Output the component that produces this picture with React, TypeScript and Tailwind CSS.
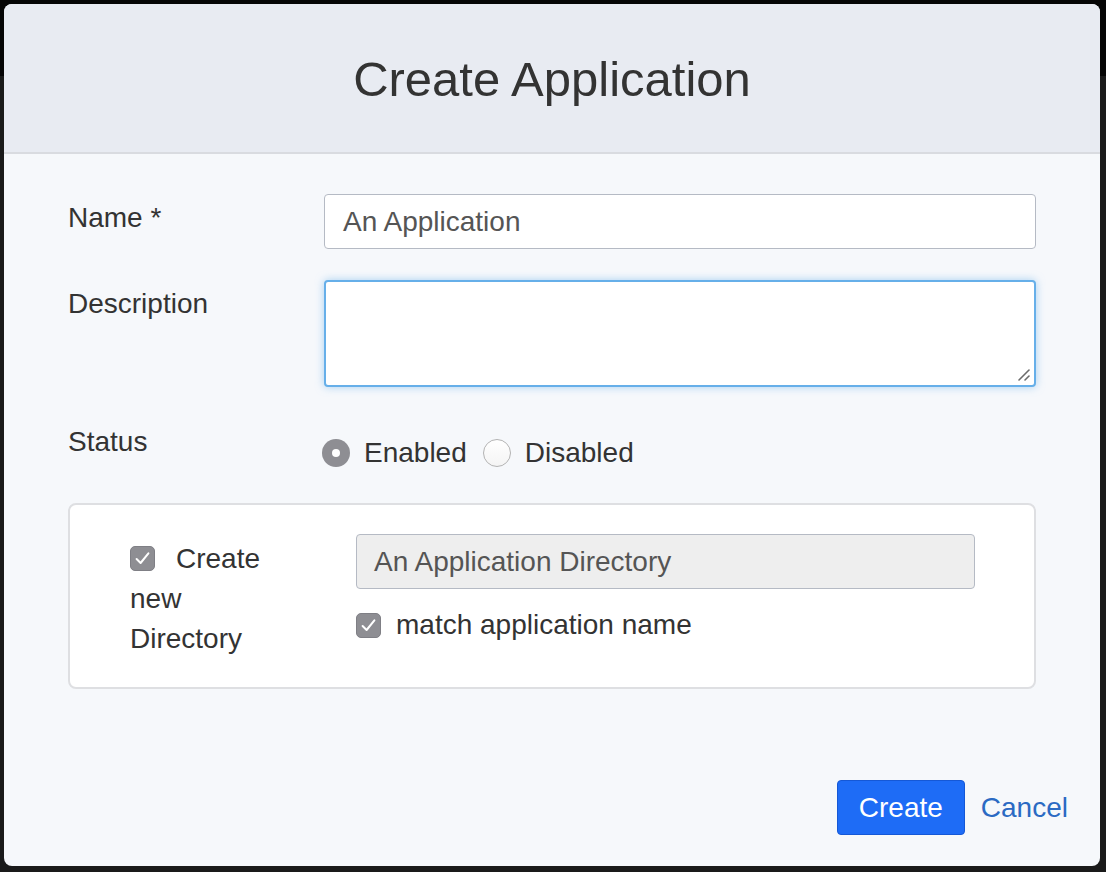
import React from "react";

const font = { fontFamily: '"Liberation Sans", Arial, Helvetica, sans-serif' };

function CheckBox() {
  return (
    <span className="inline-flex h-[25px] w-[25px] shrink-0 items-center justify-center rounded-[5px] border border-[#7f7f85] bg-[#8e8e93]">
      <svg width="19" height="19" viewBox="0 0 19 19">
        <path d="M3.6 10 L7.6 14 L15.4 4.4" fill="none" stroke="#ffffff" strokeWidth="2" strokeLinecap="round" strokeLinejoin="round" />
      </svg>
    </span>
  );
}

export default function App() {
  return (
    <div
      className="h-[872px] w-[1106px] overflow-hidden bg-[linear-gradient(to_bottom,#050505_0px,#050505_76px,#1a1a1a_76px)] p-[4px] pr-[6px] pb-[6px]"
      style={font}
    >
      <div className="flex h-[862px] w-[1096px] flex-col overflow-hidden rounded-[8px] bg-[#f6f8fb]">
        {/* header */}
        <div className="flex h-[150px] shrink-0 items-center justify-center border-b-2 border-[#d9dbe0] bg-[#e8ebf2] pt-[2px]">
          <h1 className="text-[49px] leading-none text-[#333333]">Create Application</h1>
        </div>

        {/* body */}
        <div className="flex flex-1 flex-col px-[64px] pt-[40px]">
          {/* Name */}
          <div className="flex">
            <div className="w-[256px] shrink-0 pt-[4px] text-[28px] leading-[40px] text-[#333333]">Name *</div>
            <div className="flex h-[55px] flex-1 items-center rounded-[4px] border border-[#b5bac4] bg-white px-[18px] text-[28px] text-[#555555]">
              An Application
            </div>
          </div>

          {/* Description */}
          <div className="mt-[31px] flex">
            <div className="w-[256px] shrink-0 pt-[4px] text-[28px] leading-[40px] text-[#333333]">Description</div>
            <div className="relative h-[107px] flex-1 rounded-[4px] border-2 border-[#66afe9] bg-white shadow-[0_0_8px_rgba(102,175,233,0.55)]">
              <textarea className="h-full w-full resize-none bg-transparent outline-none" aria-label="Description" />
              <svg className="absolute bottom-[3px] right-[3px]" width="14" height="14" viewBox="0 0 14 14">
                <path d="M2 12 L12 2" stroke="#6b6b6b" strokeWidth="1.6" strokeLinecap="round" />
                <path d="M8 12 L12 8" stroke="#6b6b6b" strokeWidth="1.6" strokeLinecap="round" />
              </svg>
            </div>
          </div>

          {/* Status */}
          <div className="mt-[31px] flex">
            <div className="w-[256px] shrink-0 pt-[4px] text-[28px] leading-[40px] text-[#333333]">Status</div>
            <div className="ml-[-2px] flex items-center pt-[15px] text-[28px] leading-[40px] text-[#333333]">
              <span className="flex h-[28px] w-[28px] items-center justify-center rounded-full bg-[#8e8e93]">
                <span className="h-[8px] w-[8px] rounded-full bg-white" />
              </span>
              <span className="ml-[14px]">Enabled</span>
              <span className="ml-[16px] h-[28px] w-[28px] rounded-full border border-[#b3b3b3] bg-[linear-gradient(to_bottom,#ffffff,#f4f4f4)]" />
              <span className="ml-[14px]">Disabled</span>
            </div>
          </div>

          {/* Directory panel */}
          <div className="mt-[30px] flex h-[186px] rounded-[8px] border-2 border-[#dedfe2] bg-white pl-[60px] pr-[59px] pt-[29px]">
            <div className="w-[150px] shrink-0 pt-[3px] text-[28px] leading-[40px] text-[#333333]">
              <span className="inline-flex align-middle">
                <CheckBox />
              </span>
              <span className="ml-[21px] align-middle">Create</span> new Directory
            </div>
            <div className="ml-[76px] flex flex-1 flex-col">
              <div className="flex h-[55px] items-center rounded-[4px] border border-[#b5bac4] bg-[#eeeeee] px-[17px] text-[28px] text-[#555555]">
                An Application Directory
              </div>
              <div className="mt-[16px] flex items-center text-[28px] leading-[40px] text-[#333333]">
                <CheckBox />
                <span className="ml-[15px]">match application name</span>
              </div>
            </div>
          </div>

          {/* footer */}
          <div className="mt-auto mb-[31px] mr-[-32px] flex items-center justify-end">
            <button className="ml-[1px] h-[55px] w-[128px] rounded-[4px] border border-[#1558d6] bg-[#1e6cf6] text-[28px] text-white">
              Create
            </button>
            <a className="ml-[16px] text-[28px] text-[#2b6ac3]" href="#">
              Cancel
            </a>
          </div>
        </div>
      </div>
    </div>
  );
}
